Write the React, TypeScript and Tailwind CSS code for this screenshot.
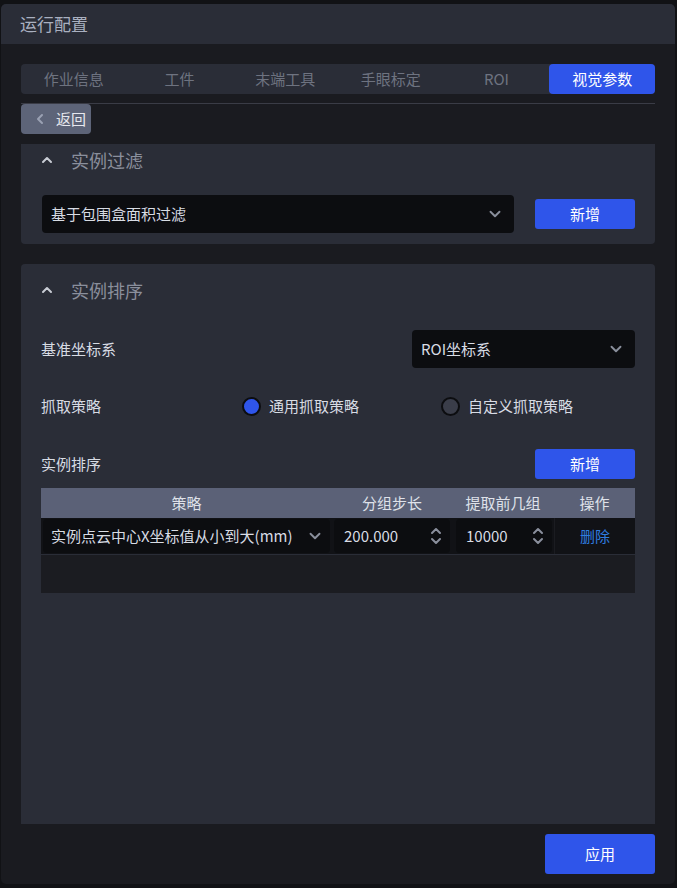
import { ChevronDown, ChevronLeft, ChevronUp } from "lucide-react";

const tabs = ["作业信息", "工件", "末端工具", "手眼标定", "ROI", "视觉参数"];

function Spinner() {
  return (
    <svg width="12" height="20" viewBox="0 0 12 20" fill="none" stroke="#8a8f9c" strokeWidth="2" strokeLinecap="round" strokeLinejoin="round">
      <path d="M2 7l4-4 4 4" />
      <path d="M2 13l4 4 4-4" />
    </svg>
  );
}

function SectionHead({ title }: { title: string }) {
  return (
    <div className="flex h-[32px] items-center gap-[16px] pl-[18px]">
      <ChevronUp className="h-[16px] w-[16px] text-[#c8ccd4]" strokeWidth={3} />
      <span className="text-[18px] text-[#8a8f9c]">{title}</span>
    </div>
  );
}

export default function App() {
  return (
    <div
      className="h-[888px] w-[677px] bg-[#111215] pt-[4px] pl-[1px]"
      style={{ fontFamily: '"Noto Sans CJK SC", "Noto Sans", sans-serif' }}
    >
      <div className="flex h-[880px] w-[674px] flex-col overflow-hidden rounded-[5px] bg-[#1a1b20]">
        {/* header */}
        <div className="flex h-[40px] items-center bg-[#2a2d37] pl-[19px] text-[17px] text-[#a9b0c0]">运行配置</div>

        <div className="flex flex-1 flex-col px-[20px] pt-[20px]">
          {/* tabs */}
          <div className="grid h-[30px] grid-cols-6 rounded-[4px] bg-[#2a2d37] text-[15px]">
            {tabs.map((t, i) => (
              <div
                key={t}
                className={
                  i === 5
                    ? "flex items-center justify-center rounded-[4px] bg-[#2f55ea] text-white"
                    : "flex items-center justify-center text-[#6e7380]"
                }
              >
                {t}
              </div>
            ))}
          </div>
          <div className="mt-[9px] h-px bg-[#3a3c46]" />

          <div className="flex">
            <button className="flex h-[30px] w-[70px] items-center gap-[8px] rounded-[4px] bg-[#5d6478] pl-[11px] text-[15px] text-[#e6e8ee]">
              <ChevronLeft className="h-[16px] w-[16px] text-[#9aa1b3]" strokeWidth={3} />
              返回
            </button>
          </div>

          {/* 实例过滤 */}
          <div className="mt-[10px] rounded-b-[4px] bg-[#2a2d37] pb-[11px]">
            <SectionHead title="实例过滤" />
            <div className="mt-[19px] flex items-center pl-[21px] pr-[20px]">
              <div className="flex h-[38px] w-[472px] items-center justify-between rounded-[4px] bg-[#0c0d10] pl-[9px] pr-[10px] text-[15px] text-[#d8dce4]">
                基于包围盒面积过滤
                <ChevronDown className="h-[18px] w-[18px] text-[#8a8f9c]" strokeWidth={2.5} />
              </div>
              <button className="ml-auto h-[30px] w-[100px] rounded-[3px] bg-[#2f55ea] text-[15px] text-white">新增</button>
            </div>
          </div>

          {/* 实例排序 */}
          <div className="mt-[20px] flex flex-1 flex-col rounded-t-[4px] bg-[#2a2d37] pt-[10px] pl-[20px] pr-[20px] text-[15px] text-[#d8dce4]">
            <div className="-ml-[20px]">
              <SectionHead title="实例排序" />
            </div>
            <div className="mt-[24px] flex items-center justify-between">
              <span>基准坐标系</span>
              <div className="flex h-[38px] w-[223px] items-center justify-between rounded-[4px] bg-[#0c0d10] pl-[9px] pr-[10px]">
                ROI坐标系
                <ChevronDown className="h-[18px] w-[18px] text-[#8a8f9c]" strokeWidth={2.5} />
              </div>
            </div>
            <div className="mt-[19px] flex h-[38px] items-center">
              <span className="w-[201px]">抓取策略</span>
              <span className="flex items-center gap-[8px]">
                <span className="h-[19px] w-[19px] rounded-full border-[2px] border-[#0c0d10] bg-[#2f55ea]" />
                通用抓取策略
              </span>
              <span className="ml-[82px] flex items-center gap-[8px]">
                <span className="h-[19px] w-[19px] rounded-full border-[2px] border-[#0c0d10] bg-[#3a3d49]" />
                自定义抓取策略
              </span>
            </div>
            <div className="mt-[24px] flex items-center justify-between">
              <span>实例排序</span>
              <button className="h-[30px] w-[100px] rounded-[3px] bg-[#2f55ea] text-white">新增</button>
            </div>

            {/* table */}
            <div className="mt-[9px] bg-[#1b1c21]">
              <div className="grid h-[30px] grid-cols-[291px_120px_102px_81px] items-center bg-[#5b6177] text-center text-[#dfe2ea]">
                <span>策略</span>
                <span>分组步长</span>
                <span>提取前几组</span>
                <span>操作</span>
              </div>
              <div className="grid h-[37px] grid-cols-[291px_120px_102px_81px] items-center border-b border-[#2a2d37] bg-[#111216]">
                <div className="mx-[2px] flex h-[34px] items-center justify-between rounded-[4px] bg-[#0c0d10] pl-[8px] pr-[6px]">
                  <span className="whitespace-nowrap">实例点云中心X坐标值从小到大(mm)</span>
                  <ChevronDown className="h-[18px] w-[18px] text-[#8a8f9c]" strokeWidth={2.5} />
                </div>
                <div className="mx-[2px] flex h-[34px] items-center justify-between rounded-[4px] bg-[#0c0d10] pl-[10px] pr-[8px]">
                  <span>200.000</span>
                  <Spinner />
                </div>
                <div className="ml-[4px] mr-[2px] flex h-[34px] items-center justify-between rounded-[4px] bg-[#0c0d10] pl-[10px] pr-[8px]">
                  <span>10000</span>
                  <Spinner />
                </div>
                <div className="flex h-full items-center justify-center border-l border-[#1b1c21] text-[#2f7de1]">删除</div>
              </div>
              <div className="h-[38px]" />
            </div>
          </div>

          <div className="flex h-[60px] items-start justify-end pt-[10px]">
            <button className="h-[40px] w-[110px] rounded-[3px] bg-[#2f55ea] text-[15px] text-white">应用</button>
          </div>
        </div>
      </div>
    </div>
  );
}
